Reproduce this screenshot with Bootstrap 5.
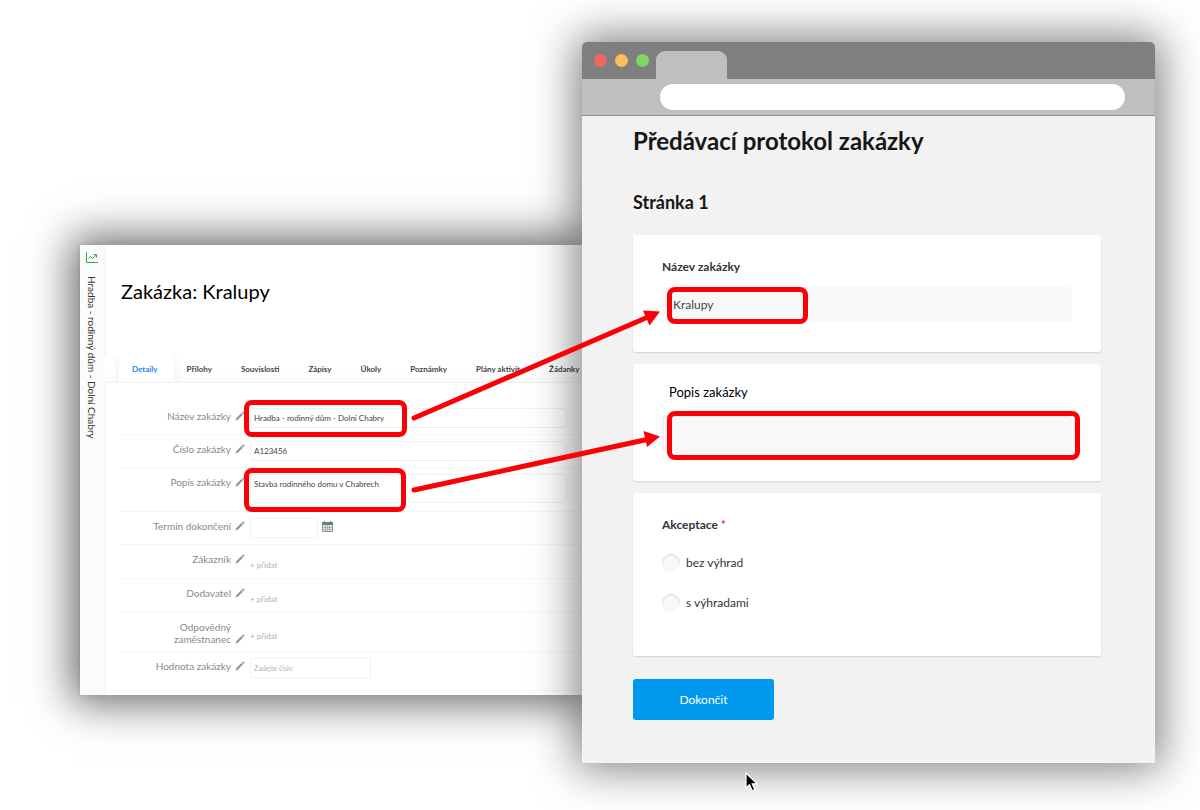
<!DOCTYPE html>
<html lang="cs">
<head>
<meta charset="utf-8">
<meta name="viewport" content="width=device-width, initial-scale=1">
<title>Předávací protokol zakázky</title>
<link href="https://cdn.jsdelivr.net/npm/bootstrap@5.3.0/dist/css/bootstrap.min.css" rel="stylesheet">
<style>
  :root { --mark: #fb0007; }
  body { font-family: Lato, "Open Sans", sans-serif; background: #fff; overflow-x: hidden; }
  .scene { padding: 42px 45px 48px 80px; }
  .crm { flex: 502 1 0; min-width: 0; margin-top: 203px; background: #fff; box-shadow: 0 0 40px 8px rgba(0,0,0,.6); }
  .browser { flex: 573 1 0; min-width: 0; background: #f2f2f2; border-radius: 5px 5px 0 0; box-shadow: 0 0 44px 6px rgba(0,0,0,.5); }

  /* order record */
  .rail { width: 24px; padding-top: 7px; background: #fbfbfb; box-shadow: 0 0 4px rgba(0,0,0,.1); }
  .rail-title { writing-mode: vertical-rl; margin-top: 13px; font-size: 10px; line-height: 16px; color: #333; white-space: nowrap; }
  .order-title { margin: 34px 0 0 17px; font-size: 20px; line-height: 24px; font-weight: 400; color: #000; white-space: nowrap; }
  .order-tabs { margin-top: 53px; padding-left: 15px; border: 0; border-bottom: 1px solid #f2f2f2; background: linear-gradient(#fff 60%, #fafafa); overflow: hidden; }
  .order-tabs .nav-link { padding: 0 16px 0 13px; border: 0; font-size: 8px; line-height: 27px; font-weight: 700; color: #3d464d; white-space: nowrap; border-radius: 3px 3px 0 0; }
  .order-tabs .nav-link.active { color: #1e88e5; box-shadow: 0 0 10px rgba(0,0,0,.08); background: #fff; }
  .order-form { padding: 19px 0 4px 15px; }
  .order-row { padding: 6px 15px 6px 0; border-bottom: 1px solid #f7f7f7; }
  .order-row .caption { width: 126px; margin-right: 5px; padding-top: 2px; font-size: 10px; line-height: 12px; color: #858a8f; text-align: right; }
  .caption svg { margin: 0 0 1px 4px; flex: none; }
  .order-row .form-control { padding: 0 3px; font-size: 8px; line-height: 18px; height: 20px; min-height: 0; color: #444; border-color: #f0f0f0; border-radius: 3px; resize: none; background: transparent; }
  .order-row textarea.form-control { height: 29px; }
  .order-row .form-control::placeholder { color: #b5b5b5; font-size: 7px; }
  .add-link { padding: 0; border: 0; background: none; font-size: 8px; line-height: 10px; margin-top: 9px; color: #b0b0b0; }
  .row-people { min-height: 34px; }
  .row-two-lines .add-link { margin-top: 12px; }
  .order-row.row-end { padding-bottom: 12px; }
  .w-date { width: 68px; }
  .w-amount { width: 121px; }

  /* browser frame */
  .titlebar { height: 37px; padding-left: 12px; background: #7f7f7f; border-radius: 5px 5px 0 0; }
  .dot { width: 13px; height: 13px; border-radius: 50%; }
  .browser-tab { width: 71px; height: 28px; margin-left: 7px; background: #bfbfbf; border-radius: 9px 9px 0 0; }
  .toolbar { padding: 5px 30px 5px 78px; background: #bfbfbf; border-bottom: 1px solid #8c8c8c; }
  .address { height: 26px; border: 0; border-radius: 13px; }

  /* protocol form */
  .protocol { padding: 8px 54px 43px 51px; color: #161616; }
  .protocol h1 { font-size: 24px; line-height: 34px; font-weight: 700; margin: 0; }
  .protocol h2 { font-size: 18px; line-height: 24px; font-weight: 700; margin: 32px 0 21px; }
  .panel { padding: 24px 29px 30px; margin-bottom: 12px; background: #fff; border-radius: 3px; box-shadow: 0 1px 2px rgba(0,0,0,.14); }
  .panel .q { display: block; font-size: 12px; line-height: 16px; font-weight: 700; margin-bottom: 12px; color: #333; }
  .panel .form-control { height: 35px; padding: 0 11px; font-size: 12px; border: 0; border-radius: 4px; background: #f8f8f8; color: #444; }
  .panel-desc { padding-top: 20px; padding-bottom: 28px; }
  .panel-desc .q { font-size: 13px; font-weight: 400; color: #000; padding: 0 7px; margin-bottom: 16px; }
  .panel .form-control.tall { height: 37px; box-shadow: inset 1px 1px 2px rgba(0,0,0,.06); }
  .panel-accept { padding-bottom: 23px; }
  .panel-accept .q { margin-bottom: 20px; }
  .panel .form-check { min-height: 0; margin: 0 0 20px; padding: 0; font-size: 12px; line-height: 20px; color: #333; gap: 6px; }
  .panel .form-check-input { float: none; width: 18px; height: 18px; margin: 0; border: 0; background-color: #f8f8f8; box-shadow: inset 0 1px 2px rgba(0,0,0,.14); }
  .finish { width: 141px; height: 41px; margin-top: 11px; font-size: 12px; color: #fff; background: #0099ee; border: 0; border-radius: 3px; }
  .finish:hover { background: #0088d4; color: #fff; }

  /* annotations laid over both windows */
  .hl { position: absolute; border: 5px solid var(--mark); border-radius: 8px; pointer-events: none; }
  .hl-name { inset: -8px auto auto -6px; width: 163px; height: 37px; }
  .hl-desc { inset: -6px auto auto -6px; width: 162px; height: 44px; }
  .hl-name-out { inset: 0 auto auto 5px; width: 141px; height: 37px; }
  .hl-desc-out { inset: -5px -8px auto 5px; height: 49px; }
  .arrows { position: absolute; left: -172px; top: 260px; pointer-events: none; }
  .pointer { position: absolute; left: 162px; top: 729px; }
</style>
</head>
<body>
<svg class="d-none">
  <symbol id="pencil" viewBox="0 0 10 10"><path d="M.5 9.500 1.200 7.200 6.400 2 8 3.600 2.800 8.800zM6.900 1.500 7.700.700Q8.200.300 8.700.800L9.200 1.300Q9.700 1.800 9.300 2.300L8.500 3.100z" fill="#929699"/></symbol>
</svg>
<main class="scene d-flex align-items-start">

  <section class="crm d-flex">
    <aside class="rail d-flex flex-column align-items-center flex-shrink-0">
      <svg width="12" height="11" viewBox="0 0 12 11" fill="none" stroke="#3aa653"><path d="M.5 0v10.500H12"/><path d="M2.500 6.500 4.500 4.500 6.500 6.500 10 3M7.500 2.500h3v3"/></svg>
      <div class="rail-title">Hradba - rodinný dům - Dolní Chabry</div>
    </aside>
    <div class="flex-grow-1 overflow-hidden">
      <h2 class="order-title">Zakázka: Kralupy</h2>
      <ul class="nav nav-tabs flex-nowrap order-tabs">
        <li class="nav-item"><a class="nav-link active" href="#">Detaily</a></li>
        <li class="nav-item"><a class="nav-link" href="#">Přílohy</a></li>
        <li class="nav-item"><a class="nav-link" href="#">Souvislosti</a></li>
        <li class="nav-item"><a class="nav-link" href="#">Zápisy</a></li>
        <li class="nav-item"><a class="nav-link" href="#">Úkoly</a></li>
        <li class="nav-item"><a class="nav-link" href="#">Poznámky</a></li>
        <li class="nav-item"><a class="nav-link" href="#">Plány aktivit</a></li>
        <li class="nav-item"><a class="nav-link" href="#">Žádanky</a></li>
      </ul>
      <form class="order-form">
        <div class="order-row d-flex align-items-start">
          <div class="caption d-flex justify-content-end align-items-end flex-shrink-0"><label for="o-name">Název zakázky</label><svg width="10" height="10"><use href="#pencil"/></svg></div>
          <div class="position-relative flex-grow-1"><input id="o-name" class="form-control" value="Hradba - rodinný dům - Dolní Chabry"><span class="hl hl-name"></span></div>
        </div>
        <div class="order-row d-flex align-items-start">
          <div class="caption d-flex justify-content-end align-items-end flex-shrink-0"><label for="o-num">Číslo zakázky</label><svg width="10" height="10"><use href="#pencil"/></svg></div>
          <input id="o-num" class="form-control" value="A123456">
        </div>
        <div class="order-row d-flex align-items-start pb-2">
          <div class="caption d-flex justify-content-end align-items-end flex-shrink-0"><label for="o-desc">Popis zakázky</label><svg width="10" height="10"><use href="#pencil"/></svg></div>
          <div class="position-relative flex-grow-1 d-flex"><textarea id="o-desc" class="form-control">Stavba rodinného domu v Chabrech</textarea><span class="hl hl-desc"></span></div>
        </div>
        <div class="order-row d-flex align-items-start">
          <div class="caption d-flex justify-content-end align-items-end flex-shrink-0"><label for="o-date">Termín dokončení</label><svg width="10" height="10"><use href="#pencil"/></svg></div>
          <input id="o-date" class="form-control w-date">
          <svg class="ms-1" width="11" height="15" viewBox="0 -3 11 15"><path d="M.5 1.500h10v9h-10z" fill="#e3e8e6" stroke="#8b9693"/><path d="M0 1h11v3H0zM2 0h1v2H2zM8 0h1v2H8z" fill="#6f7d7a"/><path d="M1 6.500h9M1 8.500h9M3.500 4v6M5.500 4v6M7.500 4v6" stroke="#9aa5a2" stroke-width=".7"/></svg>
        </div>
        <div class="order-row row-people d-flex align-items-start">
          <div class="caption d-flex justify-content-end align-items-end flex-shrink-0"><span>Zákazník</span><svg width="10" height="10"><use href="#pencil"/></svg></div>
          <button type="button" class="add-link">+ přidat</button>
        </div>
        <div class="order-row row-people d-flex align-items-start">
          <div class="caption d-flex justify-content-end align-items-end flex-shrink-0"><span>Dodavatel</span><svg width="10" height="10"><use href="#pencil"/></svg></div>
          <button type="button" class="add-link">+ přidat</button>
        </div>
        <div class="order-row row-two-lines d-flex align-items-start">
          <div class="caption d-flex justify-content-end align-items-end flex-shrink-0"><span>Odpovědný<br>zaměstnanec</span><svg width="10" height="10"><use href="#pencil"/></svg></div>
          <button type="button" class="add-link">+ přidat</button>
        </div>
        <div class="order-row row-end d-flex align-items-start">
          <div class="caption d-flex justify-content-end align-items-end flex-shrink-0"><label for="o-val">Hodnota zakázky</label><svg width="10" height="10"><use href="#pencil"/></svg></div>
          <input id="o-val" class="form-control w-amount" placeholder="Zadejte číslo">
        </div>
      </form>
    </div>
  </section>

  <section class="browser position-relative">
    <div class="titlebar d-flex align-items-end">
      <div class="d-flex gap-2 align-self-center">
        <span class="dot" style="background:#ed6a5e"></span><span class="dot" style="background:#fdbc5f"></span><span class="dot" style="background:#84d461"></span>
      </div>
      <div class="browser-tab"></div>
    </div>
    <div class="toolbar"><input class="form-control address" aria-label="Adresa"></div>
    <form class="protocol">
      <h1>Předávací protokol zakázky</h1>
      <h2>Stránka 1</h2>
      <div class="panel">
        <label class="q" for="p-name">Název zakázky</label>
        <div class="position-relative"><input id="p-name" class="form-control" value="Kralupy"><span class="hl hl-name-out"></span></div>
      </div>
      <div class="panel panel-desc">
        <label class="q" for="p-desc">Popis zakázky</label>
        <div class="position-relative"><input id="p-desc" class="form-control tall"><span class="hl hl-desc-out"></span></div>
      </div>
      <fieldset class="panel panel-accept">
        <legend class="q">Akceptace <span class="text-danger">*</span></legend>
        <div class="form-check d-flex align-items-center"><input class="form-check-input" type="radio" name="accept" id="a1"><label for="a1">bez výhrad</label></div>
        <div class="form-check d-flex align-items-center"><input class="form-check-input" type="radio" name="accept" id="a2"><label for="a2">s výhradami</label></div>
      </fieldset>
      <button type="button" class="btn finish">Dokončit</button>
    </form>

    <svg class="arrows" width="256" height="196" viewBox="410 302 256 196">
      <g stroke="#fb0007" stroke-width="5" stroke-linecap="round"><path d="M414 418 648 317M414 490 647 439.500"/></g>
      <path d="M660 311.500 643 310.500 649.500 325.500zM660 436.500 643.500 431 647 447z" fill="#fb0007"/>
    </svg>
    <svg class="pointer" width="16" height="22" viewBox="0 0 16 22"><path d="M2 2v15l3.500-3.200 2.700 6 2.600-1.200-2.600-5.800H13z" fill="#000" stroke="#fff" stroke-width="1.200"/></svg>
  </section>
</main>
<script src="https://cdn.jsdelivr.net/npm/bootstrap@5.3.0/dist/js/bootstrap.bundle.min.js"></script>
</body>
</html>
